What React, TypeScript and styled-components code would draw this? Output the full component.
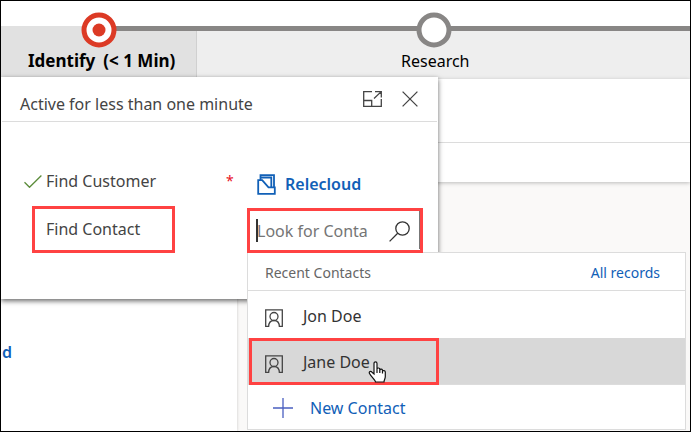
import React from "react";
import styled, { createGlobalStyle, css } from "styled-components";

const color = {
  text: "#444444",
  link: "#1160b7",
  rail: "#888685",
  active: "#dc3a25",
  mark: "#ff4242",
  line: "#dcdcdc",
};

const GlobalStyle = createGlobalStyle`
  *, *::before, *::after { box-sizing: border-box; }
  body {
    margin: 0;
    font-family: "Noto Sans", "Open Sans", sans-serif;
    font-size: 16px;
    line-height: 24px;
    color: ${color.text};
  }
  button, input { font: inherit; color: inherit; padding: 0; border: 0; background: none; }
  a { color: ${color.link}; text-decoration: none; }
  svg { display: block; flex: none; }
`;

const Page = styled.main`
  position: relative;
  display: flex;
  flex-direction: column;
  min-height: 100vh;
  overflow: hidden;
  border: 1px solid #000;
  background: #fff;
`;

const ProcessBar = styled.nav`
  display: grid;
  grid-template-columns: 196px 1fr;
  padding-top: 25px;
`;

const Stage = styled.button<{ $active?: boolean }>`
  position: relative;
  display: flex;
  align-items: flex-start;
  gap: 8px;
  height: 53px;
  padding-top: 23px;
  color: #000;
  background: #eeeeee;
  padding-left: 204px;
  &::before {
    content: "";
    position: absolute;
    top: 0;
    left: 0;
    right: 0;
    height: 5px;
    background: ${color.rail};
  }
  ${(p) =>
    p.$active &&
    css`
      padding-left: 27px;
      font-size: 17px;
      font-weight: 700;
      background: #e1e1e1;
      border-right: 1px solid #d0d0d0;
      &::before {
        left: 98px;
        right: -1px;
      }
    `}
`;

const StageDot = styled.svg<{ $left: number }>`
  position: absolute;
  top: -14px;
  left: ${(p) => p.$left}px;
`;

const FormHeader = styled.header`
  position: relative;
  height: 103px;
  background: linear-gradient(${color.line}, ${color.line}) 0 63px / 100% 1px no-repeat #fff;
  box-shadow: 0 1px 4px rgba(0, 0, 0, 0.25);
`;

const FormBody = styled.div`
  flex: 1;
  display: flex;
  background: #faf9f8;
`;

const SidePanel = styled.section`
  width: 236px;
  padding: 158px 0 0 1px;
  font-weight: 600;
  background: #fff;
  box-shadow: 0 0 3px rgba(0, 0, 0, 0.2);
`;

const Flyout = styled.section`
  position: absolute;
  top: 76px;
  left: 0;
  width: 437px;
  height: 222px;
  background: #fff;
  box-shadow: 0 2px 5px rgba(0, 0, 0, 0.6);
`;

const FlyoutHeader = styled.header`
  display: flex;
  align-items: flex-start;
  height: 45px;
  margin: 0 1px;
  padding: 14px 19px 0 18px;
  border-bottom: 1px solid ${color.line};
`;

const FlyoutTitle = styled.h2`
  flex: 1;
  margin: 0;
  font-size: 16px;
  line-height: 26px;
  font-weight: 400;
`;

const IconButton = styled.button`
  display: flex;
  margin-left: 20px;
`;

const Fields = styled.div`
  display: grid;
  grid-template-columns: 22px 180px 22px 1fr;
  grid-auto-rows: 48px;
  align-items: center;
  padding: 35px 16px 0 23px;
`;

const Required = styled.span`
  font-size: 14px;
  color: #e81123;
`;

const RecordLink = styled.a`
  display: flex;
  align-items: center;
  gap: 9px;
  padding: 6px 0 0 9px;
  font-weight: 600;
`;

const FieldLabel = styled.label`
  grid-column: 2;
  position: relative;
`;

const Lookup = styled.div`
  grid-column: 4;
  position: relative;
  display: flex;
  align-items: center;
  gap: 12px;
  width: 172px;
  height: 40px;
  padding: 4px 9px 0 9px;
  border-right: 1px solid #777;
`;

const LookupInput = styled.input`
  flex: 1;
  min-width: 0;
  height: 28px;
  outline: 0;
  &::placeholder {
    color: #757575;
    opacity: 1;
  }
`;

const Caret = styled.span`
  position: absolute;
  left: 8px;
  top: 10px;
  width: 2px;
  height: 23px;
  background: #333;
`;

const Mark = styled.span<{ $inset: string }>`
  position: absolute;
  z-index: 1;
  inset: ${(p) => p.$inset};
  border: 3px solid ${color.mark};
  pointer-events: none;
`;

const Menu = styled.section`
  position: absolute;
  top: 251px;
  left: 246px;
  right: 4px;
  border: 1px solid ${color.line};
  background: #fff;
`;

const MenuHeader = styled.header`
  display: flex;
  justify-content: space-between;
  height: 38px;
  padding: 8px 25px 0 17px;
  font-size: 14px;
  color: #666;
  border-bottom: 1px solid ${color.line};
`;

const Option = styled.button<{ $hover?: boolean }>`
  position: relative;
  display: flex;
  align-items: center;
  gap: 20px;
  width: 100%;
  height: 47px;
  padding: 2px 0 0 17px;
  color: #333;
  background: ${(p) => (p.$hover ? "#d8d8d8" : "#fff")};
  border-bottom: ${(p) => (p.$hover ? `1px solid ${color.line}` : "0")};
  svg:first-child { margin-top: 4px; }
`;

const NewContact = styled.button`
  display: flex;
  align-items: center;
  gap: 17px;
  height: 44px;
  padding: 1px 0 0 25px;
  color: ${color.link};
`;

const Pointer = styled.svg`
  position: absolute;
  z-index: 2;
  top: 23px;
  left: 120px;
`;

const PersonIcon = () => (
  <svg width="18" height="18" viewBox="0 0 18 18" fill="none" stroke="#444" strokeWidth="1.3">
    <path d="M3.200 17.300H.7V.8h16.600v16.500h-2.500" />
    <circle cx="9" cy="7.500" r="4" />
    <path d="M3.600 18c0-3.900 2-6.500 5.400-6.500s5.400 2.600 5.400 6.500" />
  </svg>
);

export default function App() {
  return (
    <>
      <GlobalStyle />
      <Page>
        <ProcessBar aria-label="Business process">
          <Stage $active>
            <StageDot $left={80} width="36" height="36" viewBox="0 0 36 36">
              <circle cx="18" cy="18" r="15" fill="#fff" stroke={color.active} strokeWidth="5" />
              <circle cx="18" cy="18" r="6.500" fill={color.active} />
            </StageDot>
            <span>Identify</span>
            <span>(&lt; 1 Min)</span>
          </Stage>
          <Stage>
            <StageDot $left={219} width="36" height="36" viewBox="0 0 36 36">
              <circle cx="18" cy="18" r="15" fill="#fff" stroke={color.rail} strokeWidth="5" />
            </StageDot>
            Research
          </Stage>
        </ProcessBar>
        <FormHeader />
        <FormBody>
          <SidePanel>
            <a href="#account">d</a>
          </SidePanel>
        </FormBody>

        <Flyout aria-label="Identify stage">
          <FlyoutHeader>
            <FlyoutTitle>Active for less than one minute</FlyoutTitle>
            <IconButton aria-label="Dock">
              <svg width="19" height="16" viewBox="0 0 19 16" fill="none" stroke="#444" strokeWidth="1.3">
                <path d="M9 .7H.7v14.600h17.600V8M.7 9.500h8v5.800M11 7.500 18 .9M12 .7h6.300v5.800" />
              </svg>
            </IconButton>
            <IconButton aria-label="Close">
              <svg width="16" height="16" viewBox="0 0 16 16" fill="none" stroke="#444" strokeWidth="1.3">
                <path d="m.6.6 14.800 14.800M15.400.6.6 15.400" />
              </svg>
            </IconButton>
          </FlyoutHeader>
          <Fields>
            <svg width="18" height="13" viewBox="0 0 18 13" fill="none" stroke="#5b8c3a" strokeWidth="1.300">
              <path d="m.5 7.300 5 5L17.400.5" />
            </svg>
            <span>Find Customer</span>
            <Required>*</Required>
            <RecordLink href="#relecloud">
              <svg width="19" height="21" viewBox="0 0 19 21" fill="none" stroke={color.link} strokeWidth="1.800">
                <path d="M3.500 6V1.200h13.500V14" />
                <path d="M3.500 3.500h10.800V13" />
                <path d="M1.200 6.200h4l6.300 7.100h6.300v6.500H1.200z" />
              </svg>
              Relecloud
            </RecordLink>
            <FieldLabel htmlFor="contact">
              Find Contact
              <Mark $inset="-11px 51px -12px -14px" />
            </FieldLabel>
            <Lookup>
              <LookupInput id="contact" placeholder="Look for Conta" />
              <Caret />
              <svg width="21" height="21" viewBox="0 0 21 21" fill="none" stroke="#333" strokeWidth="1.300">
                <circle cx="13.500" cy="7.500" r="6.700" />
                <path d="M8.700 12.300.6 20.400" />
              </svg>
              <Mark $inset="-1px -4px -4px -1px" />
            </Lookup>
          </Fields>
        </Flyout>

        <Menu aria-label="Contact results">
          <MenuHeader>
            <span>Recent Contacts</span>
            <a href="#all">All records</a>
          </MenuHeader>
          <Option>
            <PersonIcon />
            Jon Doe
          </Option>
          <Option $hover>
            <PersonIcon />
            Jane Doe
            <Mark $inset="0 246px -1px 1px" />
            <Pointer width="19" height="22" viewBox="0 0 19 22" fill="#fff" stroke="#111" strokeWidth="1.200">
              <path d="M6 13V2.500C6 .2 9 .2 9 2.500V8c0-1.500 2.800-1.300 2.800.3V9c.3-1.300 2.700-1 2.700.5v.7c.5-1.200 2.800-.8 2.800.8v4.500c0 2.500-1.300 3.500-1.300 5.500H7.500c0-2-4-5-6-8.500-1-1.800 1.200-2.700 2.500-1.300z" />
              <path d="M9 8v4M11.800 9v3M14.500 10v2.500" />
            </Pointer>
          </Option>
          <NewContact>
            <svg width="20" height="20" viewBox="0 0 20 20" stroke="#4a5fc0" strokeWidth="1.300">
              <path d="M10 0v20M0 10h20" />
            </svg>
            New Contact
          </NewContact>
        </Menu>
      </Page>
    </>
  );
}
